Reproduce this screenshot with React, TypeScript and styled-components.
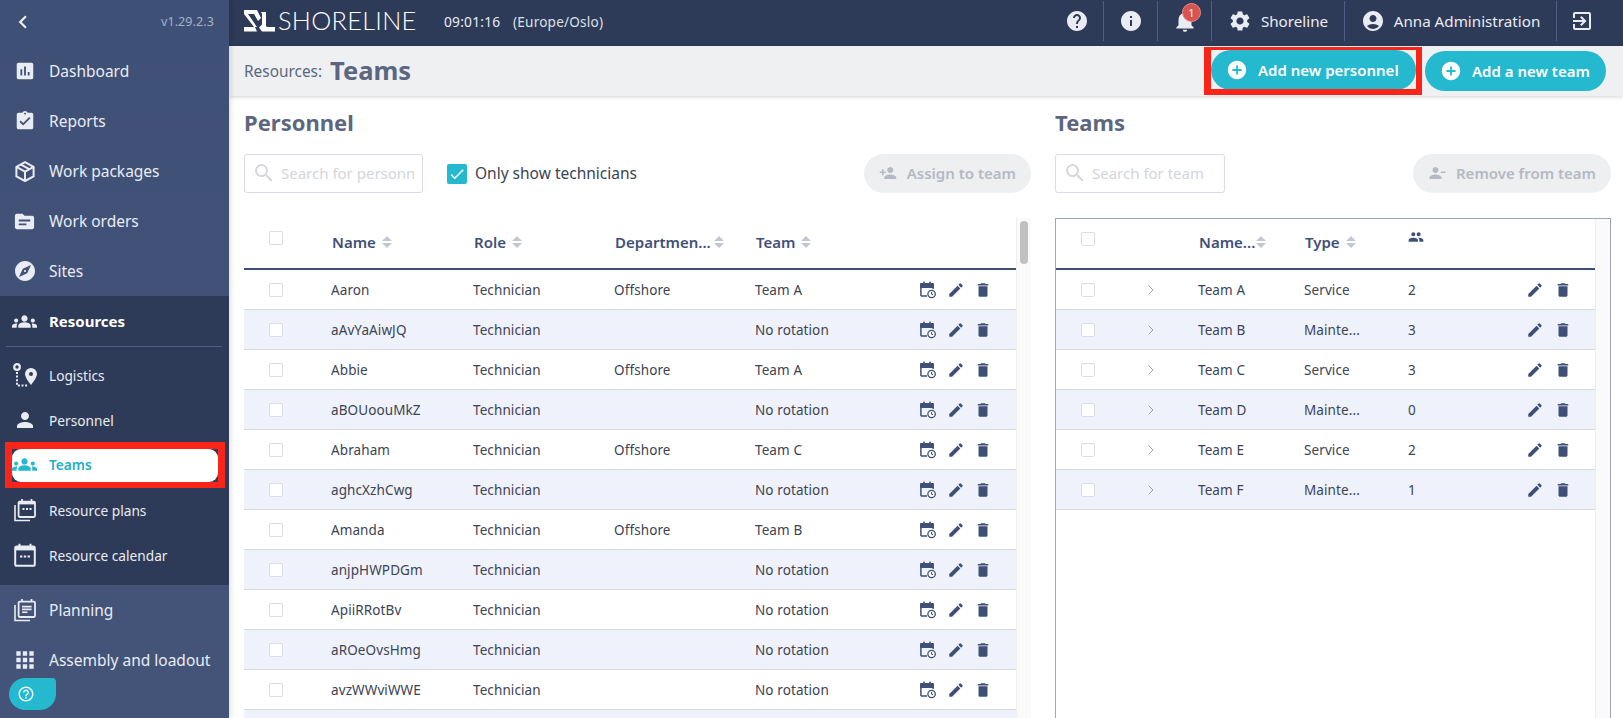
import React from "react";
import styled, { createGlobalStyle } from "styled-components";
import {
  MdAssessment, MdAssignmentTurnedIn, MdTopic, MdExplore, MdGroups, MdPerson, MdApps,
  MdHelp, MdInfo, MdNotifications, MdSettings, MdAccountCircle, MdExitToApp, MdAddCircle,
  MdPersonAdd, MdPersonRemove, MdEdit, MdDelete, MdSearch, MdCheck, MdPeople, MdChevronLeft,
  MdHelpOutline,
} from "react-icons/md";
import { ChevronRight } from "lucide-react";

const FONT = `"Noto Sans", "Open Sans", sans-serif`;

const Global = createGlobalStyle`
  html, body { margin: 0; padding: 0; height: 100%; overflow: hidden; background: #fff; }
  body { font-family: ${FONT}; }
  #root { height: 100%; }
  * { box-sizing: border-box; }
`;

const Page = styled.div`
  display: flex;
  width: 1623px;
  height: 718px;
  overflow: hidden;
  position: relative;
`;

/* ---------- sidebar ---------- */
const Sidebar = styled.aside`
  width: 229px;
  flex: none;
  display: flex;
  flex-direction: column;
  background: linear-gradient(#3f5077, #445479);
  color: #eef0f5;
  z-index: 3;
  box-shadow: 2px 0 5px rgba(0, 0, 0, 0.12);
`;
const SideTop = styled.div`
  height: 46px;
  flex: none;
  display: flex;
  align-items: center;
  justify-content: space-between;
  padding: 0 15px 3px 10px;
`;
const Version = styled.span`
  font-size: 12.5px;
  letter-spacing: 0.1px;
  color: #a5b0c8;
`;
const NavItem = styled.div<{ $h?: number; $bold?: boolean }>`
  height: ${(p) => p.$h ?? 50}px;
  flex: none;
  display: flex;
  align-items: center;
  font-size: ${(p) => (p.$bold ? 15 : 15.5)}px;
  font-weight: ${(p) => (p.$bold ? 700 : 400)};
  color: ${(p) => (p.$bold ? "#fff" : "#e9ecf3")};
  white-space: nowrap;
`;
const NavIcon = styled.span<{ $active?: boolean }>`
  width: 49px;
  flex: none;
  display: flex;
  justify-content: center;
  color: ${(p) => (p.$active ? "#25b9cf" : "#e9ecf3")};
`;
const ResourceGroup = styled.div`
  background: #2d3a58;
  display: flex;
  flex-direction: column;
  height: 289px;
  flex: none;
`;
const GroupRule = styled.hr`
  margin: 0 7px 6px 6px;
  border: 0;
  border-top: 1px solid #525f85;
`;
const SubItem = styled(NavItem)`
  height: 45px;
  font-size: 13.7px;
  padding-bottom: 1px;
`;
const RedFrame = styled.div`
  margin: -1px 4px 0 5px;
  height: 46px;
  flex: none;
  border: solid #fb2419;
  border-width: 7px 7px 6px;
`;
const ActivePill = styled.div`
  height: 100%;
  background: #fff;
  border-radius: 9px;
  display: flex;
  align-items: center;
  font-size: 13.7px;
  font-weight: 600;
  color: #25b0c6;
  padding-bottom: 2px;
`;
const ActiveIcon = styled(NavIcon)`
  width: 24px;
  margin-right: 13px;
`;
const HelpBubble = styled.div`
  position: absolute;
  left: 9px;
  top: 678px;
  width: 47px;
  height: 32px;
  background: #25b9cf;
  border-radius: 16px 4px 16px 16px;
  display: flex;
  align-items: center;
  padding-left: 8px;
  color: #e8f8fb;
  z-index: 4;
`;

/* ---------- main ---------- */
const Main = styled.div`
  flex: 1;
  min-width: 0;
  display: flex;
  flex-direction: column;
`;
const TopBar = styled.header`
  height: 46px;
  flex: none;
  background: #2d3a58;
  display: flex;
  align-items: center;
  color: #e9ecf3;
  padding: 0 16px 4px 15px;
`;
const Logo = styled.div`
  display: flex;
  align-items: center;
  gap: 3px;
  width: 200px;
  flex: none;
`;
const LogoWord = styled.span`
  font-family: "Lato", ${FONT};
  font-weight: 300;
  font-size: 25.3px;
  letter-spacing: 0.3px;
  color: #fff;
  line-height: 1;
`;
const Clock = styled.span`
  font-size: 13.8px;
  letter-spacing: 0.2px;
  width: 69px;
  flex: none;
`;
const Zone = styled.span`
  font-size: 13.6px;
  letter-spacing: 0.2px;
  color: #dde1ea;
  flex: 1;
`;
const TopCell = styled.div<{ $w: number }>`
  width: ${(p) => p.$w}px;
  height: 40px;
  flex: none;
  display: flex;
  align-items: center;
  justify-content: center;
  gap: 9px;
  border-right: 1px solid #525f85;
  font-size: 15.2px;
  color: #e9ecf3;
  position: relative;
`;
const LastCell = styled(TopCell)`
  border-right: 0;
`;
const Badge = styled.span`
  position: absolute;
  left: 24px;
  top: 2px;
  width: 19px;
  height: 19px;
  border-radius: 50%;
  background: #d9534f;
  border: 1px solid #e98a87;
  color: #fff;
  font-size: 11px;
  display: flex;
  align-items: center;
  justify-content: center;
`;
const SubHeader = styled.div`
  height: 50px;
  flex: none;
  background: #eff0f2;
  box-shadow: 0 1px 4px rgba(0, 0, 0, 0.18);
  display: flex;
  align-items: center;
  padding: 0 17px 0 15px;
  z-index: 2;
  color: #5c677f;
`;
const Crumb = styled.span`
  font-size: 15.4px;
  margin-right: 8px;
`;
const PageTitle = styled.h1`
  margin: -2px 0 0;
  font-size: 25.5px;
  font-weight: 700;
  flex: 1;
`;
const PillButton = styled.button`
  height: 40px;
  border: 0;
  border-radius: 20px;
  background: #25b9cf;
  color: #fff;
  display: flex;
  align-items: center;
  gap: 10px;
  font-family: ${FONT};
  font-size: 15px;
  font-weight: 600;
  padding: 0 16px 0 15px;
  white-space: nowrap;
`;
const RedBox = styled.div`
  height: 48px;
  width: 218px;
  margin: 0 3px 0 0;
  border: solid #fb2419;
  border-width: 3px 6px 6px 7px;
  overflow: hidden;
  flex: none;
`;
const WideButton = styled(PillButton)`
  width: 205px;
`;
const TeamButton = styled(PillButton)`
  width: 181px;
`;
const Panels = styled.div`
  flex: 1;
  min-height: 0;
  display: flex;
  gap: 24px;
  padding: 0 12px 0 15px;
`;
const Panel = styled.section<{ $w: number }>`
  width: ${(p) => p.$w}px;
  flex: none;
  display: flex;
  flex-direction: column;
  min-height: 0;
`;
const PanelTitle = styled.h2`
  margin: 0;
  height: 58px;
  padding-bottom: 6px;
  flex: none;
  display: flex;
  align-items: center;
  font-size: 22px;
  font-weight: 700;
  color: #5c677f;
`;
const Tools = styled.div`
  height: 39px;
  flex: none;
  display: flex;
  align-items: center;
  margin-bottom: 25px;
`;
const SearchBox = styled.div<{ $w: number }>`
  width: ${(p) => p.$w}px;
  height: 39px;
  flex: none;
  border: 1px solid #d8dce6;
  border-radius: 3px;
  display: flex;
  align-items: center;
  padding: 0 8px 2px 7px;
  gap: 5px;
  color: #d5d7dc;
  overflow: hidden;
`;
const SearchText = styled.span`
  font-size: 15px;
  color: #d3d5da;
  white-space: nowrap;
  overflow: hidden;
`;
const TechCheck = styled.label`
  display: flex;
  align-items: center;
  gap: 8px;
  margin-left: 24px;
  padding-bottom: 2px;
  font-size: 15.5px;
  color: #3c4354;
`;
const CheckOn = styled.span`
  width: 20px;
  height: 20px;
  border-radius: 2px;
  background: #25b9cf;
  color: #fff;
  display: flex;
  align-items: center;
  justify-content: center;
  margin-top: 2px;
`;
const DisabledButton = styled.div`
  margin-left: auto;
  height: 39px;
  border-radius: 20px;
  background: #eeeff1;
  color: #b4b9c3;
  display: flex;
  align-items: center;
  gap: 10px;
  font-size: 15px;
  font-weight: 600;
  padding: 0 15px 1px;
  white-space: nowrap;
`;
const TableWrap = styled.div<{ $boxed?: boolean }>`
  flex: 1;
  min-height: 0;
  display: flex;
  overflow: hidden;
  border: ${(p) => (p.$boxed ? "1px solid #9ca5c0" : "0")};
  border-bottom: 0;
`;
const Table = styled.div`
  flex: 1;
  min-width: 0;
`;
const Gutter = styled.div`
  width: 15px;
  flex: none;
  background: #fafafa;
  border-left: 1px solid #eeeeee;
  padding: 3px 3px 0 3px;
`;
const Thumb = styled.div`
  height: 43px;
  border-radius: 4px;
  background: #c1c1c1;
`;
const HeadRow = styled.div<{ $cols: string; $h: number }>`
  display: grid;
  grid-template-columns: ${(p) => p.$cols};
  height: ${(p) => p.$h}px;
  align-items: center;
  border-bottom: 2px solid #3f5077;
  padding-bottom: 3px;
`;
const Row = styled.div<{ $cols: string; $odd: boolean }>`
  display: grid;
  grid-template-columns: ${(p) => p.$cols};
  height: 40px;
  align-items: center;
  border-bottom: 1px solid #d6d9e0;
  background: ${(p) => (p.$odd ? "#eff2fa" : "#fff")};
  font-size: 13.5px;
  color: #3c4354;
`;
const CheckCell = styled.div`
  padding-left: 25px;
  display: flex;
`;
const HeadCheckCell = styled(CheckCell)`
  margin-top: -7px;
`;
const Check = styled.span`
  width: 14px;
  height: 14px;
  border: 1px solid #dcdee3;
  border-radius: 2px;
  background: #fff;
`;
const HeadCell = styled.div<{ $gap?: number }>`
  display: flex;
  align-items: center;
  gap: ${(p) => p.$gap ?? 6}px;
  padding-left: 1px;
  font-size: 15px;
  font-weight: 600;
  color: #3f5077;
  white-space: nowrap;
  min-width: 0;
`;
const CountHead = styled.div`
  color: #3f5077;
  display: flex;
  margin-top: -10px;
`;
const Cell = styled.div`
  white-space: nowrap;
  overflow: hidden;
  letter-spacing: 0.1px;
`;
const Actions = styled.div`
  display: flex;
  align-items: center;
  gap: 9.5px;
  color: #3f5077;
`;
const Chevron = styled.div`
  color: #73777e;
  display: flex;
  margin-left: -5px;
`;
const ResourceRows = styled.div`
  display: flex;
  flex-direction: column;
`;
const CalClockSvg = styled.svg`
  margin: 0 1px 0 1px;
`;

const Sort = () => (
  <svg width="10" height="12" viewBox="0 0 10 12" style={{ flex: "none" }}>
    <path d="M5 0l5 5H0zM5 12l5-5H0z" fill="#c3c7d0" />
  </svg>
);

const LogoMark = () => (
  <svg width="31" height="22" viewBox="0 0 31 22" fill="#fff">
    <path d="M0 0h13l4 8-3 3-4-7H4l9 13h-3L0 4z" />
    <path d="M0 17h11l2 4.5H0z" />
    <path d="M17 2h5v14l1 1h8v4.5H18l-3-4 3-3V4z" />
  </svg>
);

const CalClock = () => (
  <CalClockSvg width="16" height="18" viewBox="0 0 16 18" fill="none" stroke="currentColor">
    <path d="M7 15H1.6a.7.7 0 0 1-.7-.7V3.4a.7.7 0 0 1 .7-.7h10.8a.7.7 0 0 1 .7.7V8" strokeWidth="1.5" />
    <path d="M1 3h12v3.2H1zM4 .6v2.4M10 .6v2.4" strokeWidth="1.5" fill="currentColor" />
    <circle cx="11.6" cy="13" r="3.7" strokeWidth="1.3" fill="#fff" fillOpacity="0.95" />
    <path d="M11.6 11v2l1.5 .9" strokeWidth="1.1" />
  </CalClockSvg>
);

const PackageIcon = () => (
  <svg width="20" height="21" viewBox="0 0 20 21" fill="none" stroke="currentColor" strokeWidth="2" strokeLinejoin="round">
    <path d="M10 1.2l8.6 4.6v9.6L10 20l-8.6-4.6V5.8z" />
    <path d="M1.4 5.8l8.6 4.8 8.6-4.8M10 10.6V20M5.6 3.4l8.6 4.8" />
  </svg>
);

const Logistics = () => (
  <svg width="26" height="24" viewBox="0 0 26 24" fill="currentColor">
    <circle cx="5" cy="4" r="2.8" fill="none" stroke="currentColor" strokeWidth="2.2" />
    <path d="M5 9v13.5h11" fill="none" stroke="currentColor" strokeWidth="2" strokeDasharray="2 1.6" />
    <path fillRule="evenodd" d="M19 5a6 6 0 0 1 6 6c0 3.8-6 11-6 11s-6-7.2-6-11a6 6 0 0 1 6-6zm0 4a2 2 0 1 0 0 4 2 2 0 0 0 0-4z" />
  </svg>
);

const CalStack = () => (
  <svg width="22" height="24" viewBox="0 0 22 24" fill="none" stroke="currentColor">
    <path d="M1 7v15.5h15" strokeWidth="1.6" />
    <rect x="4.6" y="3.6" width="16.4" height="15.4" rx="1.2" strokeWidth="1.8" />
    <path d="M4.6 5h16.4" strokeWidth="2.8" />
    <path d="M8 1v3M17.5 1v3" strokeWidth="1.8" />
    <path d="M8.5 11h2M12 11h2M15.5 11h2" strokeWidth="1.8" />
  </svg>
);

const CalSingle = () => (
  <svg width="22" height="24" viewBox="0 0 22 24" fill="none" stroke="currentColor">
    <rect x="1.2" y="3.4" width="19.6" height="19.4" rx="1.6" strokeWidth="2" />
    <path d="M1.2 5.4h19.6" strokeWidth="4" />
    <path d="M5.5 .8v3M16.5 .8v3" strokeWidth="2" />
    <path d="M6 13.5h2.4M9.8 13.5h2.4M13.6 13.5h2.4" strokeWidth="2" />
  </svg>
);

const PlanStack = () => (
  <svg width="22" height="24" viewBox="0 0 22 24" fill="none" stroke="currentColor">
    <path d="M1 7v15.5h15" strokeWidth="1.6" />
    <rect x="4.6" y="3.6" width="16.4" height="15.4" rx="1.2" strokeWidth="1.8" />
    <path d="M8 1v3M17.5 1v3" strokeWidth="1.8" />
    <path d="M8 8.6h9.6M8 11.4h9.6M8 14.2h5.4" strokeWidth="1.6" />
  </svg>
);

const people: [string, string, string][] = [
  ["Aaron", "Offshore", "Team A"],
  ["aAvYaAiwJQ", "", "No rotation"],
  ["Abbie", "Offshore", "Team A"],
  ["aBOUoouMkZ", "", "No rotation"],
  ["Abraham", "Offshore", "Team C"],
  ["aghcXzhCwg", "", "No rotation"],
  ["Amanda", "Offshore", "Team B"],
  ["anjpHWPDGm", "", "No rotation"],
  ["ApiiRRotBv", "", "No rotation"],
  ["aROeOvsHmg", "", "No rotation"],
  ["avzWWviWWE", "", "No rotation"],
];
const teams: [string, string, string][] = [
  ["Team A", "Service", "2"],
  ["Team B", "Mainte...", "3"],
  ["Team C", "Service", "3"],
  ["Team D", "Mainte...", "0"],
  ["Team E", "Service", "2"],
  ["Team F", "Mainte...", "1"],
];

const P_COLS = "87px 142px 141px 141px 164px 1fr";
const T_COLS = "92px 50px 106px 104px 118px 1fr";

const Nav = ({ icon, label, h }: { icon: React.ReactNode; label: string; h?: number }) => (
  <NavItem $h={h}>
    <NavIcon>{icon}</NavIcon>
    {label}
  </NavItem>
);
const Sub = ({ icon, label }: { icon: React.ReactNode; label: string }) => (
  <SubItem>
    <NavIcon>{icon}</NavIcon>
    {label}
  </SubItem>
);

export default function App() {
  return (
    <Page>
      <Global />
      <Sidebar>
        <SideTop>
          <MdChevronLeft size={26} color="#eef0f5" />
          <Version>v1.29.2.3</Version>
        </SideTop>
        <Nav icon={<MdAssessment size={22} />} label="Dashboard" />
        <Nav icon={<MdAssignmentTurnedIn size={22} />} label="Reports" />
        <Nav icon={<PackageIcon />} label="Work packages" />
        <Nav icon={<MdTopic size={23} />} label="Work orders" />
        <Nav icon={<MdExplore size={24} />} label="Sites" />
        <ResourceGroup>
          <NavItem $bold>
            <NavIcon><MdGroups size={25} /></NavIcon>
            Resources
          </NavItem>
          <GroupRule />
          <ResourceRows>
            <Sub icon={<Logistics />} label="Logistics" />
            <Sub icon={<MdPerson size={24} />} label="Personnel" />
            <RedFrame>
              <ActivePill>
                <ActiveIcon $active><MdGroups size={25} style={{ flex: "none" }} /></ActiveIcon>
                Teams
              </ActivePill>
            </RedFrame>
            <Sub icon={<CalStack />} label="Resource plans" />
            <Sub icon={<CalSingle />} label="Resource calendar" />
          </ResourceRows>
        </ResourceGroup>
        <Nav icon={<PlanStack />} label="Planning" />
        <Nav icon={<MdApps size={26} />} label="Assembly and loadout" />
        <HelpBubble><MdHelpOutline size={18} /></HelpBubble>
      </Sidebar>

      <Main>
        <TopBar>
          <Logo>
            <LogoMark />
            <LogoWord>SHORELINE</LogoWord>
          </Logo>
          <Clock>09:01:16</Clock>
          <Zone>(Europe/Oslo)</Zone>
          <TopCell $w={54}><MdHelp size={24} /></TopCell>
          <TopCell $w={54}><MdInfo size={24} /></TopCell>
          <TopCell $w={54}>
            <MdNotifications size={26} />
            <Badge>1</Badge>
          </TopCell>
          <TopCell $w={133}><MdSettings size={24} />Shoreline</TopCell>
          <TopCell $w={212}><MdAccountCircle size={24} />Anna Administration</TopCell>
          <LastCell $w={50}><MdExitToApp size={24} /></LastCell>
        </TopBar>
        <SubHeader>
          <Crumb>Resources:</Crumb>
          <PageTitle>Teams</PageTitle>
          <RedBox>
            <WideButton><MdAddCircle size={22} />Add new personnel</WideButton>
          </RedBox>
          <TeamButton><MdAddCircle size={22} />Add a new team</TeamButton>
        </SubHeader>
        <Panels>
          <Panel $w={787}>
            <PanelTitle>Personnel</PanelTitle>
            <Tools>
              <SearchBox $w={179}>
                <MdSearch size={24} style={{ flex: "none" }} />
                <SearchText>Search for personnel</SearchText>
              </SearchBox>
              <TechCheck>
                <CheckOn><MdCheck size={18} /></CheckOn>
                Only show technicians
              </TechCheck>
              <DisabledButton><MdPersonAdd size={18} />Assign to team</DisabledButton>
            </Tools>
            <TableWrap>
              <Table>
                <HeadRow $cols={P_COLS} $h={52}>
                  <HeadCheckCell><Check /></HeadCheckCell>
                  <HeadCell>Name <Sort /></HeadCell>
                  <HeadCell>Role <Sort /></HeadCell>
                  <HeadCell $gap={3}>Departmen...<Sort /></HeadCell>
                  <HeadCell>Team <Sort /></HeadCell>
                  <div />
                </HeadRow>
                {people.map(([name, dept, team], i) => (
                  <Row key={name} $cols={P_COLS} $odd={i % 2 === 1}>
                    <CheckCell><Check /></CheckCell>
                    <Cell>{name}</Cell>
                    <Cell>Technician</Cell>
                    <Cell>{dept}</Cell>
                    <Cell>{team}</Cell>
                    <Actions>
                      <CalClock />
                      <MdEdit size={18} />
                      <MdDelete size={18} />
                    </Actions>
                  </Row>
                ))}
                <Row $cols={P_COLS} $odd />
              </Table>
              <Gutter><Thumb /></Gutter>
            </TableWrap>
          </Panel>
          <Panel $w={556}>
            <PanelTitle>Teams</PanelTitle>
            <Tools>
              <SearchBox $w={170}>
                <MdSearch size={24} style={{ flex: "none" }} />
                <SearchText>Search for team</SearchText>
              </SearchBox>
              <DisabledButton><MdPersonRemove size={18} />Remove from team</DisabledButton>
            </Tools>
            <TableWrap $boxed>
              <Table>
                <HeadRow $cols={T_COLS} $h={51}>
                  <HeadCheckCell><Check /></HeadCheckCell>
                  <div />
                  <HeadCell $gap={1}>Name...<Sort /></HeadCell>
                  <HeadCell>Type <Sort /></HeadCell>
                  <CountHead><MdPeople size={16} /></CountHead>
                  <div />
                </HeadRow>
                {teams.map(([name, type, n], i) => (
                  <Row key={name} $cols={T_COLS} $odd={i % 2 === 1}>
                    <CheckCell><Check /></CheckCell>
                    <Chevron><ChevronRight size={16} strokeWidth={1} /></Chevron>
                    <Cell>{name}</Cell>
                    <Cell>{type}</Cell>
                    <Cell>{n}</Cell>
                    <Actions>
                      <MdEdit size={18} />
                      <MdDelete size={18} />
                    </Actions>
                  </Row>
                ))}
              </Table>
              <Gutter />
            </TableWrap>
          </Panel>
        </Panels>
      </Main>
    </Page>
  );
}
